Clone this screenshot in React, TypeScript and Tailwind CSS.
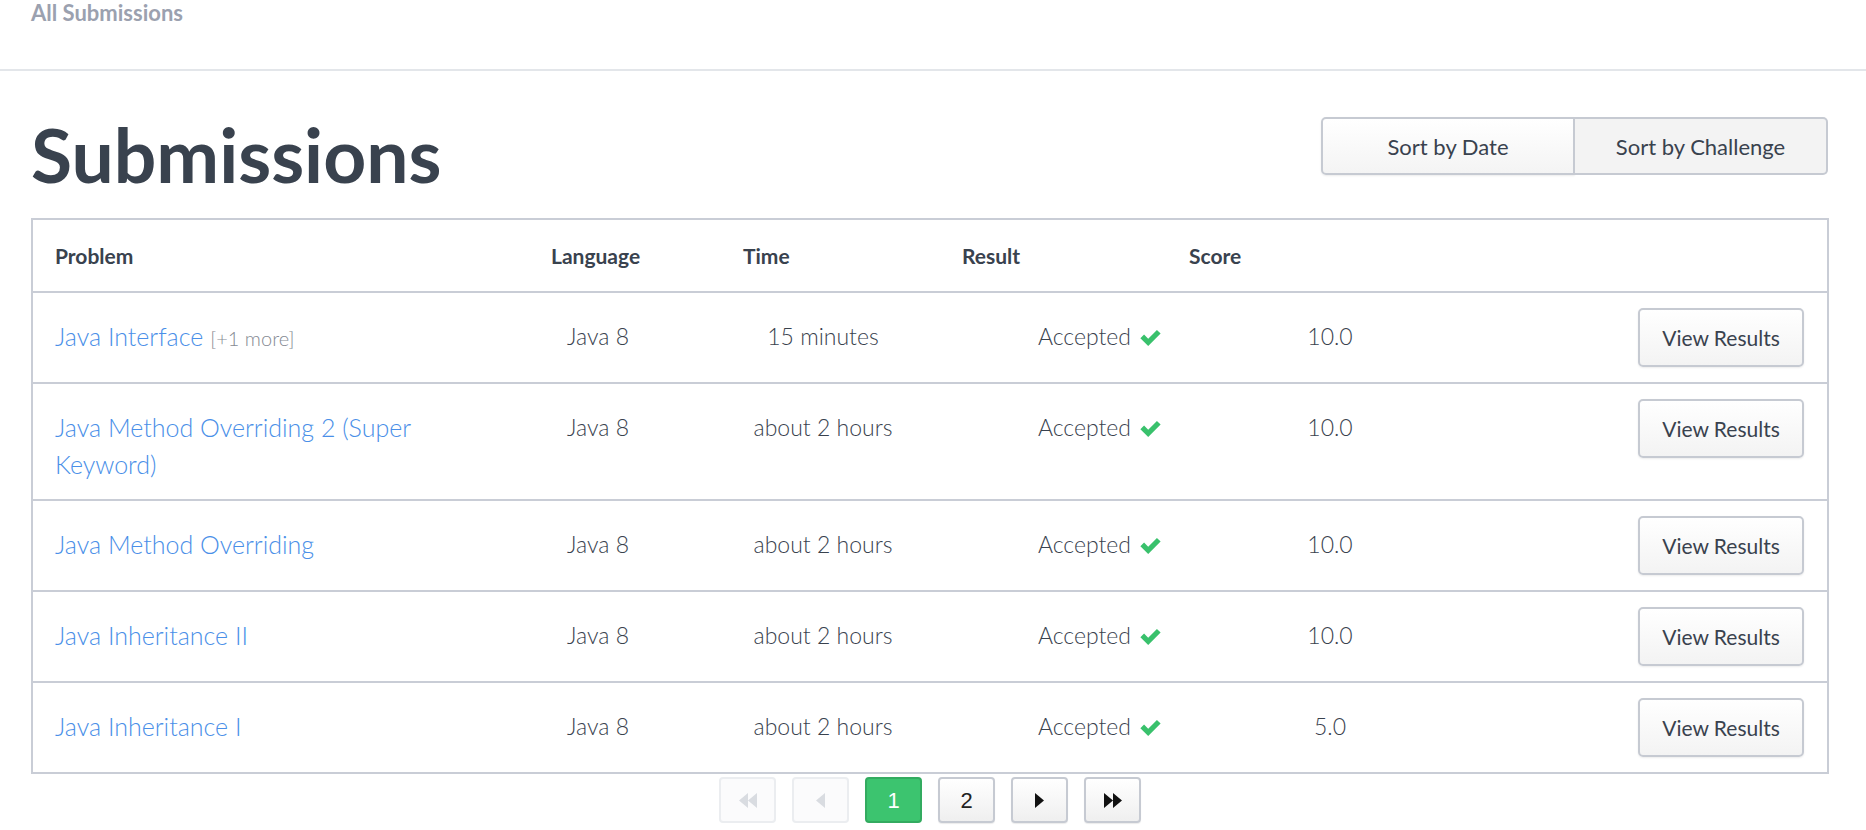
import React from "react";

const rows = [
  { name: "Java Interface", more: true, time: "15 minutes", score: "10.0" },
  { name: "Java Method Overriding 2 (Super", name2: "Keyword)", time: "about 2 hours", score: "10.0" },
  { name: "Java Method Overriding", time: "about 2 hours", score: "10.0" },
  { name: "Java Inheritance II", time: "about 2 hours", score: "10.0" },
  { name: "Java Inheritance I", time: "about 2 hours", score: "5.0" },
];

function Check() {
  return (
    <svg className="w-[23px] h-[19px] ml-[8px] mt-[1px]" viewBox="0 0 20 16">
      <path d="M1.2 8.6 L4.4 5.4 L8 9 L15.6 1.4 L18.8 4.6 L8 15.4 Z" fill="#39c16c" />
    </svg>
  );
}

function PageBtn({ children, disabled, active }: { children: React.ReactNode; disabled?: boolean; active?: boolean }) {
  const base = "w-[57px] h-[46px] rounded-[4px] flex items-center justify-center border-2";
  if (active)
    return <div className={`${base} bg-[#3cc46f] border-[#33ab60] text-white`}>{children}</div>;
  if (disabled)
    return <div className={`${base} bg-[#fbfbfc] border-[#ebedf0] text-[#d9dce1]`}>{children}</div>;
  return (
    <div className={`${base} bg-gradient-to-b from-white to-[#efefef] border-[#c6cad2] text-[#222] shadow-[0_1px_1px_rgba(0,0,0,0.08)]`}>
      {children}
    </div>
  );
}

export default function App() {
  return (
    <div className="w-[1866px] h-[830px] bg-white text-[#39424e] font-['Lato',sans-serif] overflow-hidden">
      {/* top bar */}
      <div className="h-[69px] pl-[31px] pt-[2px]">
        <span className="text-[22px] leading-[22px] font-bold text-[#9ba1af]">All Submissions</span>
      </div>
      <div className="h-[2px] bg-[#e3e6ea]" />

      <div className="pl-[31px] pr-[37px]">
        {/* title row */}
        <div className="flex justify-between items-start pt-[45px] mb-[26px]">
          <h1 className="text-[75px] leading-[76px] font-bold">Submissions</h1>
          <div className="flex mt-[1px] mr-[1px]">
            <button className="w-[254px] h-[58px] rounded-l-[5px] border-2 border-[#c6cad2] bg-gradient-to-b from-white to-[#f4f4f4] text-[22px] shadow-[0_1px_2px_rgba(0,0,0,0.08)]">
              Sort by Date
            </button>
            <button className="w-[253px] h-[58px] rounded-r-[5px] border-2 border-l-0 border-[#c6cad2] bg-[#f3f3f3] text-[22px]">
              Sort by Challenge
            </button>
          </div>
        </div>

        {/* table */}
        <div className="border-2 border-[#c9cdd6]">
          <div className="flex items-center h-[73px] border-b-2 border-[#c9cdd6] text-[21px] font-bold">
            <div className="w-[518px] pl-[22px]">Problem</div>
            <div className="w-[192px]">Language</div>
            <div className="w-[219px]">Time</div>
            <div className="w-[227px]">Result</div>
            <div>Score</div>
          </div>
          {rows.map((r, i) => (
            <div
              key={i}
              className={`flex items-start text-[23px] font-light ${i < rows.length - 1 ? "border-b-2 border-[#c9cdd6]" : ""}`}
            >
              <div className="w-[507px] pl-[22px] pt-[25px] pb-[16px] leading-[37px] text-[25px] text-[#4a8fe8]">
                {r.name}
                {r.more && <span className="text-[20px] text-[#858a93] ml-[7px]">[+1 more]</span>}
                {r.name2 && (
                  <>
                    <br />
                    {r.name2}
                  </>
                )}
              </div>
              <div className="w-[116px] pt-[25px] leading-[37px] text-center">Java 8</div>
              <div className="w-[334px] pt-[25px] leading-[37px] text-center">{r.time}</div>
              <div className="w-[220px] pt-[25px] leading-[37px] flex justify-center items-center">
                Accepted
                <Check />
              </div>
              <div className="w-[240px] pt-[25px] leading-[37px] text-center">{r.score}</div>
              <div className="flex-1 flex justify-end pr-[23px] py-[15px]">
                <button className="w-[166px] h-[59px] rounded-[5px] border-2 border-[#c6cad2] bg-gradient-to-b from-white to-[#f3f3f3] text-[21px] font-normal shadow-[0_1px_2px_rgba(0,0,0,0.08)]">
                  View Results
                </button>
              </div>
            </div>
          ))}
        </div>

        {/* pagination */}
        <div className="flex justify-center gap-[16px] mt-[3px] font-['Liberation_Sans',sans-serif] text-[22px]">
          <PageBtn disabled>
            <svg width="18" height="15" viewBox="0 0 18 15"><path d="M9 0 L0 7.5 L9 15 Z M18 0 L9 7.5 L18 15 Z" fill="currentColor" /></svg>
          </PageBtn>
          <PageBtn disabled>
            <svg width="9" height="15" viewBox="0 0 9 15"><path d="M9 0 L0 7.5 L9 15 Z" fill="currentColor" /></svg>
          </PageBtn>
          <PageBtn active>1</PageBtn>
          <PageBtn>2</PageBtn>
          <PageBtn>
            <svg width="9" height="15" viewBox="0 0 9 15"><path d="M0 0 L9 7.5 L0 15 Z" fill="#111" /></svg>
          </PageBtn>
          <PageBtn>
            <svg width="18" height="15" viewBox="0 0 18 15"><path d="M0 0 L9 7.5 L0 15 Z M9 0 L18 7.5 L9 15 Z" fill="#111" /></svg>
          </PageBtn>
        </div>
      </div>
    </div>
  );
}
